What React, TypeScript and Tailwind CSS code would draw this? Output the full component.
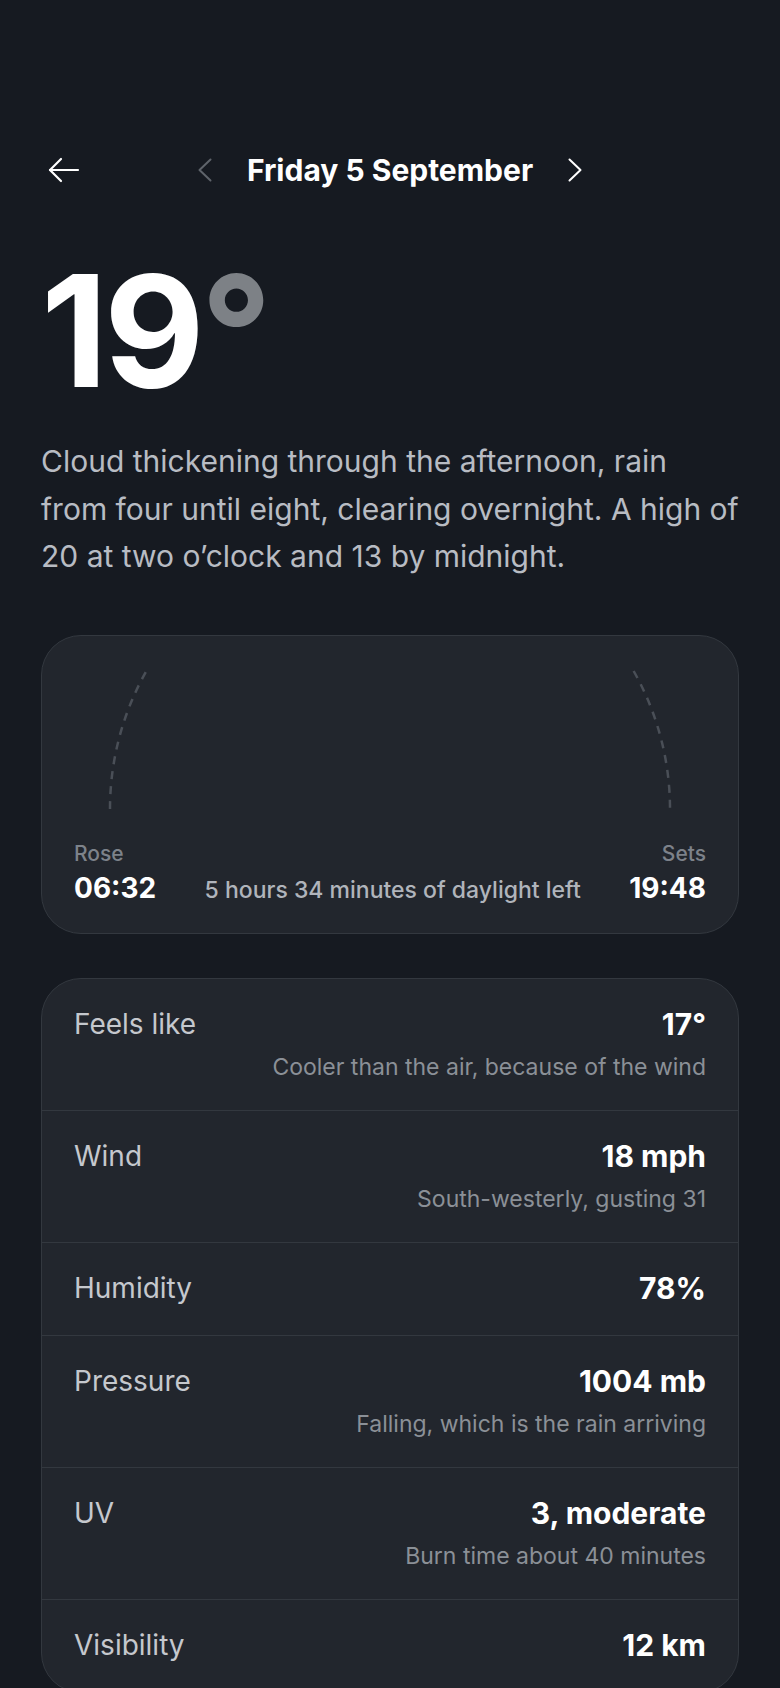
import React from "react";

const rows: { label: string; value: string; sub?: string }[] = [
  { label: "Feels like", value: "17°", sub: "Cooler than the air, because of the wind" },
  { label: "Wind", value: "18 mph", sub: "South-westerly, gusting 31" },
  { label: "Humidity", value: "78%" },
  { label: "Pressure", value: "1004 mb", sub: "Falling, which is the rain arriving" },
  { label: "UV", value: "3, moderate", sub: "Burn time about 40 minutes" },
  { label: "Visibility", value: "12 km" },
];

export default function App() {
  return (
    <div className="min-h-screen bg-[#161a21] font-['Inter','Noto_Sans',sans-serif] text-white px-[41px] pb-10">
      {/* Header */}
      <div className="pt-[148px] grid grid-cols-[1fr_auto_1fr] items-center h-[192px]">
        <div className="flex items-center pl-[7px]">
          <svg width="32" height="26" viewBox="0 0 32 26" fill="none" stroke="#ffffff" strokeWidth="2.2" strokeLinecap="round" strokeLinejoin="round">
            <path d="M30 13H2" />
            <path d="M13 2L2 13l11 11" />
          </svg>
        </div>
        <div className="flex items-center gap-[35px]">
          <svg width="14" height="24" viewBox="0 0 14 24" fill="none" stroke="#5f646b" strokeWidth="2" strokeLinecap="round" strokeLinejoin="round">
            <path d="M12.5 1.5L1.5 12l11 10.5" />
          </svg>
          <span className="text-[30px] font-bold leading-[44px]">Friday 5 September</span>
          <svg width="14" height="24" viewBox="0 0 14 24" fill="none" stroke="#ffffff" strokeWidth="2" strokeLinecap="round" strokeLinejoin="round">
            <path d="M1.5 1.5L12.5 12 1.5 22.5" />
          </svg>
        </div>
        <div />
      </div>

      {/* Temperature */}
      <div className="mt-[61px] text-[155px] font-bold leading-none tracking-[-0.025em] h-[155px]">
        19<span className="text-[#7d8186]">°</span>
      </div>

      {/* Summary */}
      <p className="mt-[30px] text-[30px] leading-[47.5px] text-[#b8bcc3]">
        Cloud thickening through the afternoon, rain from four until eight, clearing overnight. A high of 20 at two o’clock and 13 by midnight.
      </p>

      {/* Sun card */}
      <div className="mt-[54px] rounded-[40px] border border-[#33383f] bg-[#22262d] px-8 pt-8 pb-[26px]">
        <svg className="block w-full" height="152" viewBox="0 0 632 152" preserveAspectRatio="none" fill="none">
          <path d="M36 141 A280 280 0 0 1 596 141" stroke="#4a4f57" strokeWidth="2.5" strokeDasharray="8 7" />
        </svg>
        <div className="mt-[22px] flex justify-between text-[21px] font-medium leading-[24px] text-[#7d828a]">
          <span>Rose</span>
          <span>Sets</span>
        </div>
        <div className="mt-[5px] flex items-baseline justify-between">
          <span className="text-[28px] font-bold leading-[34px]">06:32</span>
          <span className="text-[23px] font-medium text-[#b0b4bb]">5 hours 34 minutes of daylight left</span>
          <span className="text-[28px] font-bold leading-[34px]">19:48</span>
        </div>
      </div>

      {/* Details card */}
      <div className="mt-[44px] rounded-[40px] border border-[#33383f] bg-[#22262d] overflow-hidden">
        {rows.map((r, i) => (
          <div
            key={r.label}
            className={`flex justify-between px-8 pt-7 pb-[29px] ${i > 0 ? "border-t border-[#33383f]" : ""}`}
          >
            <span className="text-[28px] leading-[35px] text-[#c5c8cd]">{r.label}</span>
            <div className="flex flex-col items-end">
              <span className="text-[30px] font-bold leading-[35px]">{r.value}</span>
              {r.sub && (
                <span className="mt-[11px] text-[23px] leading-[28px] text-[#8b9097]">{r.sub}</span>
              )}
            </div>
          </div>
        ))}
      </div>
    </div>
  );
}
